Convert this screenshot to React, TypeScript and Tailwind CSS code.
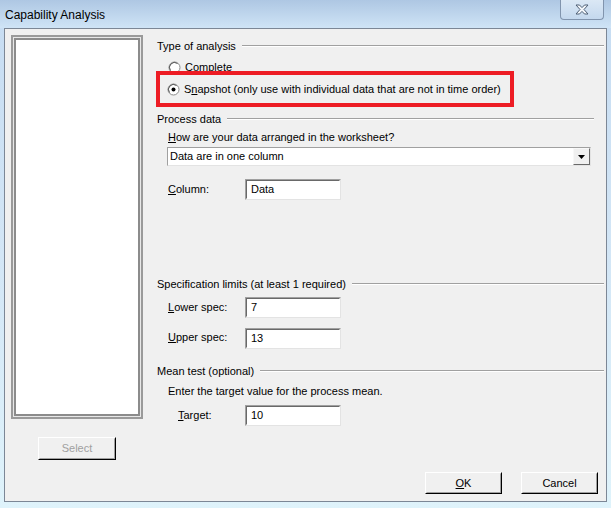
const font = { fontFamily: '"Liberation Sans", Arial, sans-serif' };

const GroupHeader = ({ title }: { title: string }) => (
  <div className="flex items-center h-[14px]">
    <span className="whitespace-nowrap pr-[6px]">{title}</span>
    <div className="flex-1 border-t border-t-[#a0a0a0] border-b border-b-white h-[2px]" />
  </div>
);

const TextBox = ({ value }: { value: string }) => (
  <div className="w-[96px] h-[21px] border border-t-[#a0a0a0] border-l-[#a0a0a0] border-b-[#e3e3e3] border-r-[#e3e3e3] bg-white">
    <div className="h-full border border-t-[#696969] border-l-[#696969] border-b-white border-r-white flex items-center px-[4px]">
      {value}
    </div>
  </div>
);

const Radio = ({ checked }: { checked?: boolean }) => (
  <svg width="13" height="13" viewBox="0 0 13 13" className="shrink-0">
    <circle cx="6.5" cy="6.5" r="5.5" fill="#fff" stroke="#8a8a8a" strokeWidth="1" />
    <path d="M2.5 9.5 A5 5 0 0 1 9.5 2.5" fill="none" stroke="#555" strokeWidth="1" />
    {checked && <circle cx="6.5" cy="6.5" r="2" fill="#000" />}
  </svg>
);

const Button = ({ children, disabled }: { children: React.ReactNode; disabled?: boolean }) => (
  <div className="h-full border border-t-white border-l-white border-b-black border-r-black bg-[#f0f0f0]">
    <div
      className={`h-full border border-t-[#f0f0f0] border-l-[#f0f0f0] border-b-[#a0a0a0] border-r-[#a0a0a0] flex items-center justify-center ${
        disabled ? 'text-[#a0a0a0]' : 'text-black'
      }`}
    >
      {children}
    </div>
  </div>
);

export default function App() {
  return (
    <div
      className="w-[611px] h-[508px] flex flex-col bg-gradient-to-b from-[#c6dcf2] via-[#d3e6f6] to-[#dff3fb] text-[11px] text-black"
      style={font}
    >
      {/* title bar */}
      <div className="h-[28px] flex items-start shrink-0 bg-gradient-to-b from-[#aec7e3] to-[#cfe4f6]">
        <div className="pl-[5px] pt-[6px] text-[12px] text-black flex-1">Capability Analysis</div>
        <div className="mr-[7px] w-[44px] h-[20px] rounded-b-[4px] border border-t-0 border-[#8194ad] bg-gradient-to-b from-[#dbe8f5] to-[#c4d8ee] flex items-center justify-center">
          <svg width="14" height="11" viewBox="0 0 14 11">
            <path
              d="M1 1 L4.5 1 L7 3.6 L9.5 1 L13 1 L9 5.5 L13 10 L9.5 10 L7 7.4 L4.5 10 L1 10 L5 5.5 Z"
              fill="#f4f7fb"
              stroke="#4d5e74"
              strokeWidth="1"
              strokeLinejoin="round"
            />
          </svg>
        </div>
      </div>

      {/* dialog body */}
      <div className="mx-[4px] h-[474px] border border-[#7c8796] bg-[#f0f0f0] flex flex-col">
        <div className="flex pt-[6px] pl-[6px]">
          {/* left column */}
          <div className="flex flex-col w-[132px] shrink-0">
            <div className="h-[384px] border-2 border-[#9a9a9a] bg-[#e8e8e8] p-px">
              <div className="h-full border-2 border-[#8c8c8c] bg-white" />
            </div>
            <div className="mt-[18px] ml-[27px] w-[78px] h-[23px]">
              <Button disabled>Select</Button>
            </div>
          </div>

          {/* right column */}
          <div className="flex flex-col ml-[14px] mr-[2px] flex-1 mt-[4px]">
            <GroupHeader title="Type of analysis" />
            <div className="mt-[7px] ml-[11px] h-[14px] flex items-center gap-[4px]">
              <Radio />
              <span>Complete</span>
            </div>
            <div className="relative z-10 -mt-[3px] -ml-[1px] w-[358px] h-[36px] border-[4px] border-[#ed1c24] flex items-center pl-[7px] gap-[4px]">
              <Radio checked />
              <span>
                S<u>n</u>apshot (only use with individual data that are not in time order)
              </span>
            </div>

            <div className="mt-[5px] mr-[10px]">
              <GroupHeader title="Process data" />
            </div>
            <div className="mt-[4px] ml-[11px] h-[14px] flex items-center">
              <span>
                <u>H</u>ow are your data arranged in the worksheet?
              </span>
            </div>
            <div className="mt-[3px] ml-[10px] w-[424px] h-[19px] border border-t-[#a0a0a0] border-l-[#a0a0a0] border-b-[#e3e3e3] border-r-[#e3e3e3] bg-white flex items-center">
              <span className="flex-1 pl-[2px]">Data are in one column</span>
              <div className="w-[17px] h-[17px] border border-t-[#f8f8f8] border-l-[#f8f8f8] border-b-[#696969] border-r-[#696969] bg-[#f0f0f0] flex items-center justify-center">
                <svg width="7" height="4" viewBox="0 0 7 4">
                  <path d="M0 0 H7 L3.5 4 Z" fill="#000" />
                </svg>
              </div>
            </div>
            <div className="mt-[13px] ml-[11px] flex items-center">
              <span className="w-[77px]">
                <u>C</u>olumn:
              </span>
              <TextBox value="Data" />
            </div>

            <div className="mt-[77px]">
              <GroupHeader title="Specification limits (at least 1 required)" />
            </div>
            <div className="mt-[6px] ml-[11px] flex items-center">
              <span className="w-[77px]">
                <u>L</u>ower spec:
              </span>
              <TextBox value="7" />
            </div>
            <div className="mt-[10px] ml-[11px] flex items-center">
              <span className="w-[77px] -mt-[3px]">
                <u>U</u>pper spec:
              </span>
              <TextBox value="13" />
            </div>

            <div className="mt-[15px]">
              <GroupHeader title="Mean test (optional)" />
            </div>
            <div className="mt-[6px] ml-[11px] h-[14px] flex items-center">
              <span>Enter the target value for the process mean.</span>
            </div>
            <div className="mt-[7px] ml-[21px] flex items-center">
              <span className="w-[67px]">
                <u>T</u>arget:
              </span>
              <TextBox value="10" />
            </div>
          </div>
        </div>

        {/* bottom buttons */}
        <div className="mt-auto mb-[7px] mr-[8px] flex justify-end gap-[19px]">
          <div className="w-[77px] h-[22px]">
            <Button>
              <u>O</u>K
            </Button>
          </div>
          <div className="w-[77px] h-[22px]">
            <Button>Cancel</Button>
          </div>
        </div>
      </div>
    </div>
  );
}
